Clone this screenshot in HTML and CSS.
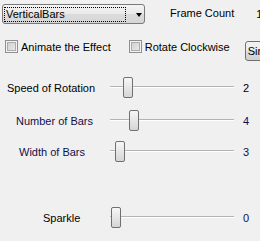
FILE: index.html
```html
<!DOCTYPE html>
<html>
<head>
<meta charset="utf-8">
<link rel="stylesheet" href="styles.css">
</head>
<body>
<div class="win">
  <div class="top">
    <div class="combo">
      <span class="combo-focus">VerticalBars</span>
      <span class="combo-arrow"></span>
    </div>
    <span class="frame-label">Frame Count</span>
    <span class="frame-val">14</span>
  </div>
  <div class="checks">
    <label class="check check-animate"><span class="box"></span><span>Animate the Effect</span></label>
    <label class="check check-rotate"><span class="box"></span><span>Rotate Clockwise</span></label>
    <button class="btn">Single</button>
  </div>
  <div class="row row-speed">
    <span class="lbl lbl-speed">Speed of Rotation</span>
    <div class="slider"><div class="track"></div><div class="thumb" style="left:13px"></div></div>
    <span class="val">2</span>
  </div>
  <div class="row row-number">
    <span class="lbl lbl-number navy">Number of Bars</span>
    <div class="slider"><div class="track"></div><div class="thumb" style="left:19px"></div></div>
    <span class="val navy">4</span>
  </div>
  <div class="row row-width">
    <span class="lbl lbl-width navy">Width of Bars</span>
    <div class="slider"><div class="track"></div><div class="thumb" style="left:5px"></div></div>
    <span class="val navy">3</span>
  </div>
  <div class="row row-sparkle">
    <span class="lbl lbl-sparkle">Sparkle</span>
    <div class="slider"><div class="track"></div><div class="thumb" style="left:1px"></div></div>
    <span class="val navy">0</span>
  </div>
</div>
</body>
</html>
```

FILE: styles.css
```css
html, body {
  margin: 0;
  padding: 0;
  background: #f0f0f0;
}
body {
  width: 260px;
  height: 241px;
  overflow: hidden;
  font-family: "Liberation Sans", Arial, sans-serif;
  font-size: 11px;
  color: #000;
}
.win {
  display: flex;
  flex-direction: column;
  width: 260px;
}
.top {
  display: flex;
  align-items: center;
  padding: 4px 0 0 2px;
  height: 20px;
  white-space: nowrap;
}
.combo {
  box-sizing: border-box;
  width: 143px;
  height: 20px;
  border: 1px solid #7a7a7a;
  border-radius: 3px;
  background: linear-gradient(#f4f4f4, #e9e9e9 50%, #dcdcdc 51%, #d6d6d6);
  display: flex;
  align-items: center;
  padding: 0 0 0 1px;
  flex-shrink: 0;
}
.combo-focus {
  box-sizing: border-box;
  width: 122px;
  height: 15px;
  border: 1px dotted #000;
  line-height: 13px;
  padding-left: 1px;
}
.combo-arrow {
  margin-left: 10px;
  width: 0;
  height: 0;
  border-left: 3.5px solid transparent;
  border-right: 3.5px solid transparent;
  border-top: 4px solid #000;
  margin-top: 1px;
}
.frame-label {
  margin-left: 25px;
  margin-top: -2px;
}
.frame-val {
  margin-left: 22px;
  margin-top: -1px;
}
.checks {
  display: flex;
  align-items: flex-start;
  margin-top: 16px;
  height: 21px;
  white-space: nowrap;
}
.check {
  display: flex;
  align-items: center;
  height: 13px;
}
.check-animate {
  margin-left: 5px;
}
.check-rotate {
  margin-left: 18px;
}
.box {
  box-sizing: border-box;
  width: 13px;
  height: 13px;
  border: 1px solid #8e8f8f;
  background: #f4f4f4;
  box-shadow: inset 0 0 0 1px #f4f4f4, inset 0 0 0 2px #ababab;
  background-image: linear-gradient(135deg, #cbcbcb, #eeeeee);
  margin-right: 3px;
}
.btn {
  box-sizing: border-box;
  margin: 1px 0 0 15px;
  height: 20px;
  width: 60px;
  border: 1px solid #707070;
  border-radius: 3px;
  background: linear-gradient(#f2f2f2, #ebebeb 50%, #dddddd 51%, #cfcfcf);
  font-family: "Liberation Sans", Arial, sans-serif;
  font-size: 11px;
  color: #000;
  text-align: left;
  padding: 0 0 0 2px;
  flex-shrink: 0;
}
.row {
  display: grid;
  grid-template-columns: 110px 124px 1fr;
  align-items: center;
  height: 21px;
  white-space: nowrap;
}
.row-speed { margin-top: 16px; }
.row-number { margin-top: 12px; }
.row-width { margin-top: 10px; }
.row-sparkle { margin-top: 45px; }
.lbl { display: block; }
.lbl-speed { padding-left: 7px; }
.lbl-number { padding-left: 16px; }
.lbl-width { padding-left: 19px; }
.lbl-sparkle { padding-left: 43px; }
.navy { color: #10104a; }
.slider {
  position: relative;
  height: 21px;
}
.track {
  position: absolute;
  left: 0;
  right: 0;
  top: 9px;
  height: 1px;
  background: #b4b4b4;
  border-bottom: 1px solid #ffffff;
}
.thumb {
  position: absolute;
  top: 0;
  box-sizing: border-box;
  width: 10px;
  height: 21px;
  border: 1px solid #707070;
  border-radius: 2px;
  background: linear-gradient(#f7f7f7, #e6e6e6 50%, #d5d5d5);
}
.val {
  padding-left: 9px;
}
```
